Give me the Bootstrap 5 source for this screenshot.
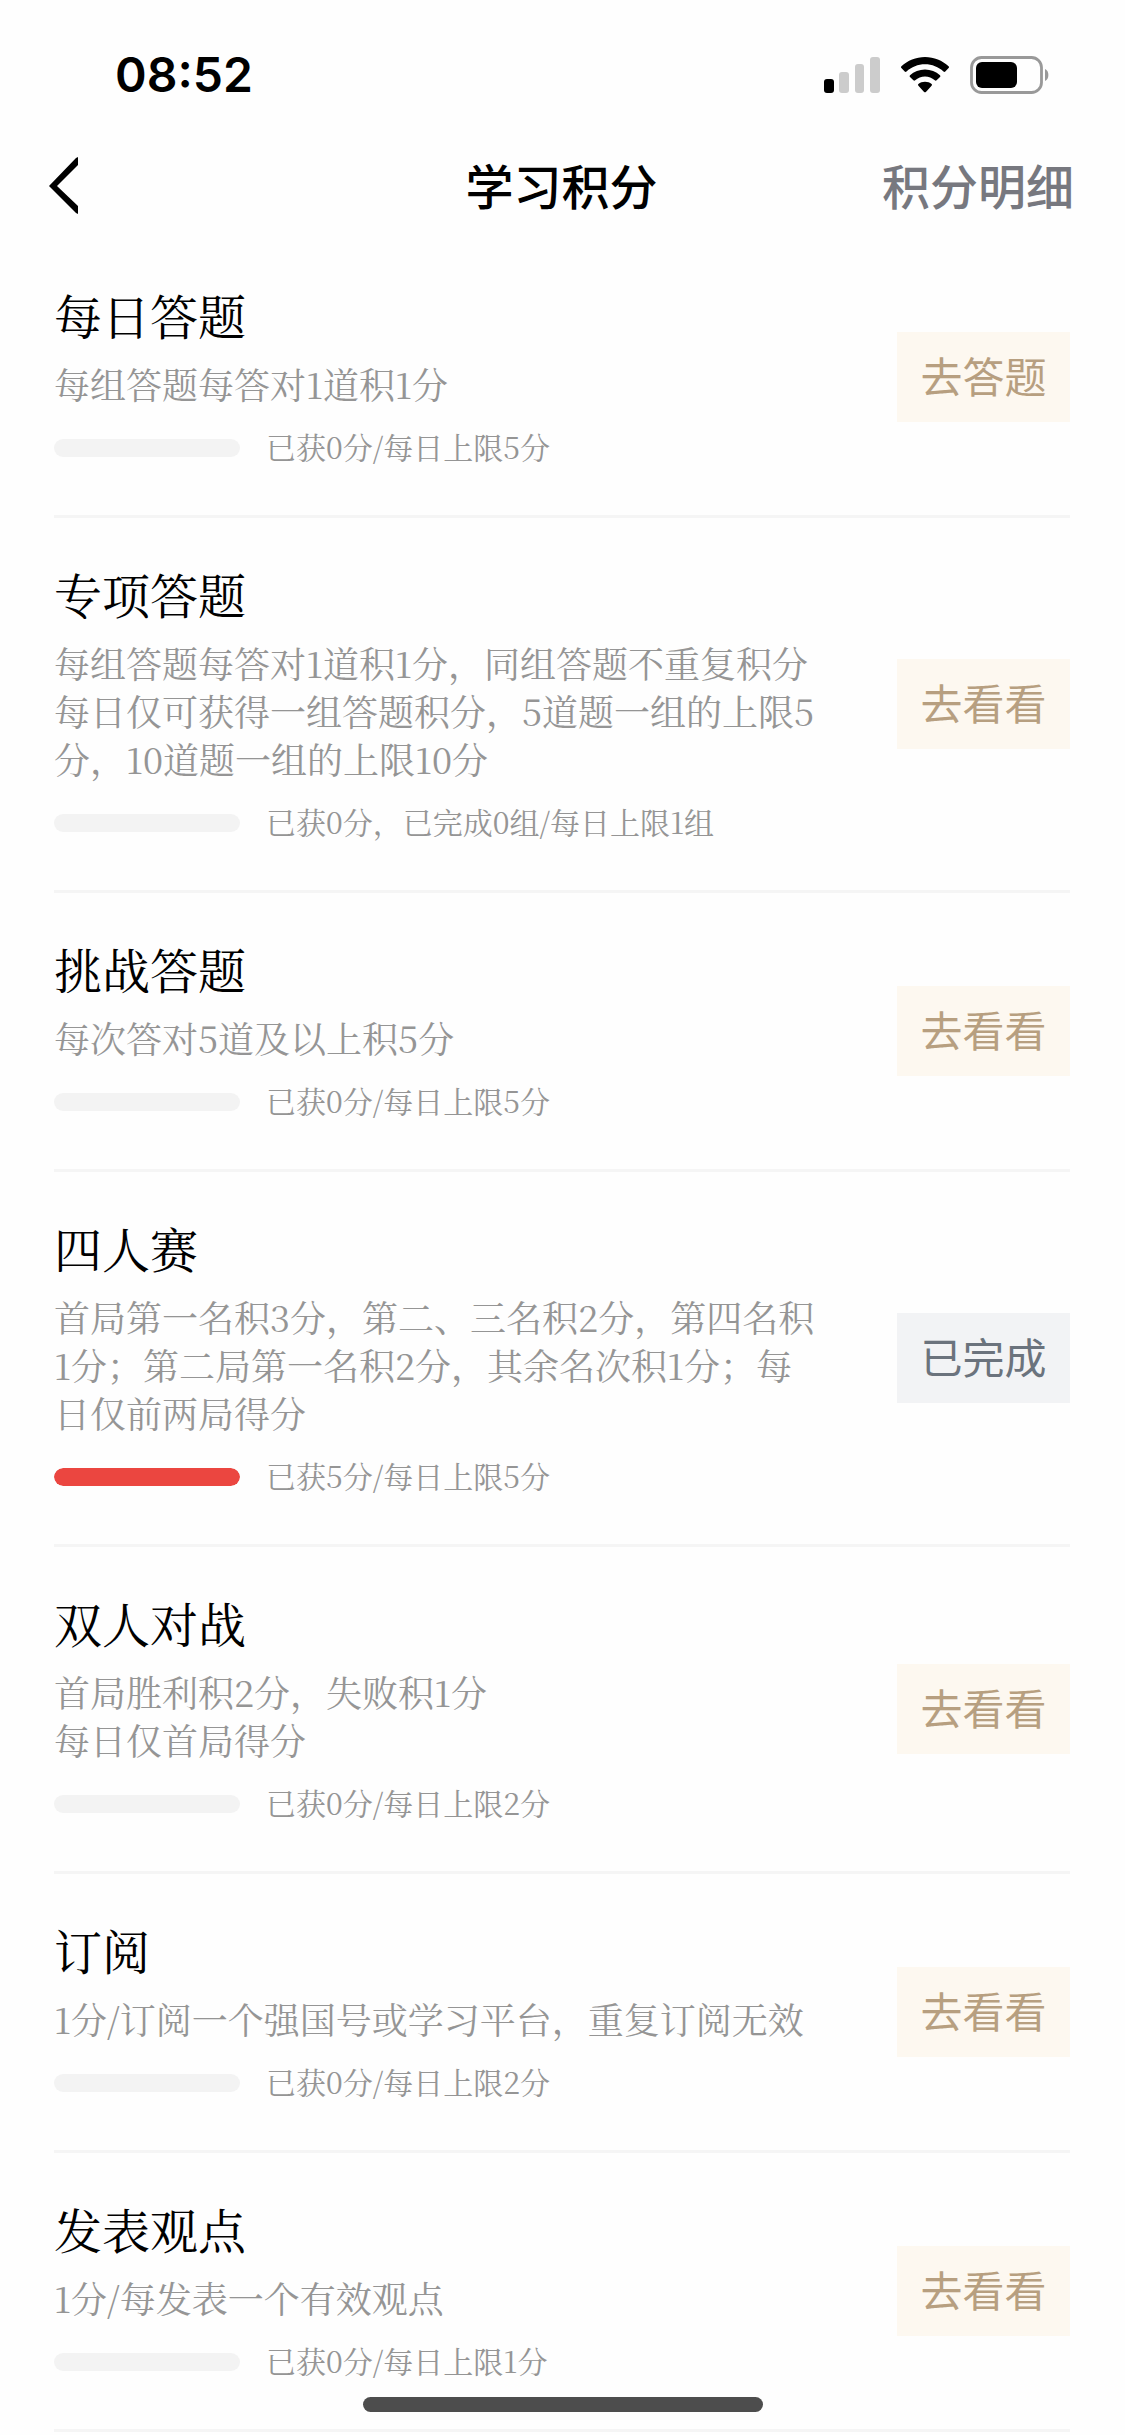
<!DOCTYPE html>
<html lang="zh-CN">
<head>
<meta charset="utf-8">
<meta name="viewport" content="width=device-width, initial-scale=1">
<title>学习积分</title>
<link rel="stylesheet" href="https://cdn.jsdelivr.net/npm/bootstrap@5.3.0/dist/css/bootstrap.min.css">
<style>
  :root {
    --sans: "Noto Sans CJK SC", sans-serif;
    --song: "Noto Serif CJK SC", "Liberation Serif", "Noto Sans CJK SC", serif;
  }
  body { background: #fefefe; color: #000; font-family: var(--sans); }
  .status-bar { height: 135px; padding: 0 75px 0 115px; }
  .clock { font: 600 48px/60px Inter, sans-serif; padding-top: 15px; }
  .status-icons { gap: 21px; padding-top: 14px; }
  .top-nav { height: 98px; margin-bottom: 6px; padding: 0 51px 0 49px; }
  .top-nav h1, .top-nav a { font-size: 48px; line-height: 72px; font-weight: 500; }
  .detail-link { color: #77787f; }
  .task-list { padding: 0 55px 0 54px; }
  .task { padding: 46px 0; border-bottom: 3px solid #f5f5f5; gap: 72px; font-family: var(--song); font-kerning: none; }
  .task h2 { font-size: 48px; line-height: 60px; font-weight: 400; margin: 0 0 15px; }
  .task-rule { font-size: 36px; line-height: 48px; font-weight: 400; color: #959595; margin: 0 0 19px; }
  .task-score { font-size: 30px; line-height: 38px; font-weight: 400; color: #959595; gap: 26px; }
  .task-score span { padding-bottom: 4px; }
  .task .progress { width: 186px; height: 18px; border-radius: 9px; background: #f3f3f3; --bs-progress-bar-bg: #eb4640; }
  .task .progress-bar { border-radius: 9px; }
  .task-btn { width: 173px; height: 90px; padding: 0 0 4px; border: 0; border-radius: 0; font: 400 42px/60px var(--sans); color: #b79f80; background: #fdf8f0; }
  .task-btn:disabled { color: #6b737d; background: #f2f3f5; opacity: 1; }
  .home-indicator { width: 400px; height: 15px; border-radius: 8px; background: #4d4d4d; margin-bottom: 23px; }
</style>
<script src="https://cdn.jsdelivr.net/npm/bootstrap@5.3.0/dist/js/bootstrap.bundle.min.js"></script>
</head>
<body>
<div class="status-bar d-flex align-items-center justify-content-between">
  <div class="clock">08:52</div>
  <div class="status-icons d-flex align-items-center">
    <svg width="56" height="36" viewBox="0 0 56 36" aria-hidden="true">
      <rect x="0" y="22" width="10" height="14" rx="3"/>
      <g fill="#ccc"><rect x="15" y="15" width="10" height="21" rx="3"/><rect x="31" y="7" width="9" height="29" rx="3"/><rect x="46" y="0" width="10" height="36" rx="3"/></g>
    </svg>
    <svg width="48" height="36" viewBox="0 0 48 36" aria-hidden="true">
      <path d="M24 0C33 0 41.500 3.500 47.600 9.300Q48.400 10.200 47.600 11.100L44.300 14.500Q43.400 15.300 42.500 14.500C37.500 9.900 31 7.300 24 7.300S10.500 9.900 5.500 14.500Q4.600 15.300 3.700 14.500L.4 11.100Q-.4 10.200 .4 9.300C6.500 3.500 15 0 24 0Z"/>
      <path d="M24 12.400C29.700 12.400 35 14.500 39 18.200Q39.900 19.100 39 20L35.600 23.300Q34.700 24.100 33.800 23.300C31.100 21 27.700 19.600 24 19.600S16.900 21 14.200 23.300Q13.300 24.100 12.400 23.300L9 20Q8.100 19.100 9 18.200C13 14.500 18.300 12.400 24 12.400Z"/>
      <path d="M24 24.700C26.700 24.700 28.800 25.500 30.600 27Q31.500 27.800 30.600 28.700L24.900 34.900Q24 35.700 23.100 34.900L17.400 28.700Q16.500 27.800 17.400 27C19.200 25.500 21.300 24.700 24 24.700Z"/>
    </svg>
    <svg width="80" height="38" viewBox="0 0 80 38" aria-hidden="true">
      <rect x="1.500" y="1.500" width="70" height="35" rx="10" fill="none" stroke="#999" stroke-width="2.800"/>
      <rect x="6" y="6" width="41" height="26" rx="6"/>
      <path d="M75 13C79.500 14.500 79.500 23.500 75 25Z" fill="#999"/>
    </svg>
  </div>
</div>

<header class="top-nav row gx-0 align-items-center">
  <div class="col d-flex">
    <a href="#" class="d-flex" aria-label="返回">
      <svg width="30" height="60" viewBox="0 0 30 60" aria-hidden="true"><path d="M27 4L29 3V11L8 32L29 52V60L27 59L0 32Z"/></svg>
    </a>
  </div>
  <h1 class="col-auto m-0">学习积分</h1>
  <div class="col text-end"><a href="#" class="detail-link text-decoration-none">积分明细</a></div>
</header>

<main class="task-list">
  <section class="task d-flex align-items-center">
    <div class="flex-fill">
      <h2>每日答题</h2>
      <p class="task-rule">每组答题每答对1道积1分</p>
      <div class="task-score d-flex align-items-center"><div class="progress" role="progressbar" aria-label="每日答题" aria-valuenow="0" aria-valuemin="0" aria-valuemax="5"></div><span>已获0分/每日上限5分</span></div>
    </div>
    <button type="button" class="btn task-btn flex-shrink-0">去答题</button>
  </section>
  <section class="task d-flex align-items-center">
    <div class="flex-fill">
      <h2>专项答题</h2>
      <p class="task-rule">每组答题每答对1道积1分，同组答题不重复积分<br>每日仅可获得一组答题积分，5道题一组的上限5分，10道题一组的上限10分</p>
      <div class="task-score d-flex align-items-center"><div class="progress" role="progressbar" aria-label="专项答题" aria-valuenow="0" aria-valuemin="0" aria-valuemax="1"></div><span>已获0分，已完成0组/每日上限1组</span></div>
    </div>
    <button type="button" class="btn task-btn flex-shrink-0">去看看</button>
  </section>
  <section class="task d-flex align-items-center">
    <div class="flex-fill">
      <h2>挑战答题</h2>
      <p class="task-rule">每次答对5道及以上积5分</p>
      <div class="task-score d-flex align-items-center"><div class="progress" role="progressbar" aria-label="挑战答题" aria-valuenow="0" aria-valuemin="0" aria-valuemax="5"></div><span>已获0分/每日上限5分</span></div>
    </div>
    <button type="button" class="btn task-btn flex-shrink-0">去看看</button>
  </section>
  <section class="task d-flex align-items-center">
    <div class="flex-fill">
      <h2>四人赛</h2>
      <p class="task-rule">首局第一名积3分，第二、三名积2分，第四名积1分；第二局第一名积2分，其余名次积1分；每日仅前两局得分</p>
      <div class="task-score d-flex align-items-center"><div class="progress" role="progressbar" aria-label="四人赛" aria-valuenow="5" aria-valuemin="0" aria-valuemax="5"><div class="progress-bar" style="width: 100%"></div></div><span>已获5分/每日上限5分</span></div>
    </div>
    <button type="button" class="btn task-btn flex-shrink-0" disabled>已完成</button>
  </section>
  <section class="task d-flex align-items-center">
    <div class="flex-fill">
      <h2>双人对战</h2>
      <p class="task-rule">首局胜利积2分，失败积1分<br>每日仅首局得分</p>
      <div class="task-score d-flex align-items-center"><div class="progress" role="progressbar" aria-label="双人对战" aria-valuenow="0" aria-valuemin="0" aria-valuemax="2"></div><span>已获0分/每日上限2分</span></div>
    </div>
    <button type="button" class="btn task-btn flex-shrink-0">去看看</button>
  </section>
  <section class="task d-flex align-items-center">
    <div class="flex-fill">
      <h2>订阅</h2>
      <p class="task-rule">1分/订阅一个强国号或学习平台，重复订阅无效</p>
      <div class="task-score d-flex align-items-center"><div class="progress" role="progressbar" aria-label="订阅" aria-valuenow="0" aria-valuemin="0" aria-valuemax="2"></div><span>已获0分/每日上限2分</span></div>
    </div>
    <button type="button" class="btn task-btn flex-shrink-0">去看看</button>
  </section>
  <section class="task d-flex align-items-center">
    <div class="flex-fill">
      <h2>发表观点</h2>
      <p class="task-rule">1分/每发表一个有效观点</p>
      <div class="task-score d-flex align-items-center"><div class="progress" role="progressbar" aria-label="发表观点" aria-valuenow="0" aria-valuemin="0" aria-valuemax="1"></div><span>已获0分/每日上限1分</span></div>
    </div>
    <button type="button" class="btn task-btn flex-shrink-0">去看看</button>
  </section>
</main>
<div class="fixed-bottom d-flex justify-content-center pe-none"><div class="home-indicator"></div></div>
</body>
</html>
